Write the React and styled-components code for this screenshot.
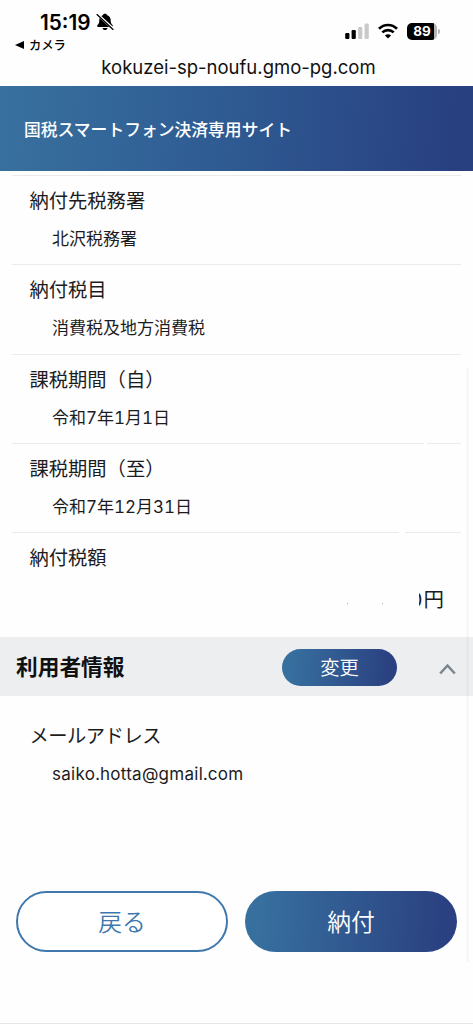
import React from 'react';
import styled, { createGlobalStyle } from 'styled-components';

const GlobalStyle = createGlobalStyle`
    * {
        box-sizing: border-box;
    }

    body {
        margin: 0;
        background: #fefefe;
        color: #1c1c1e;
        font-family: Inter, "Noto Sans CJK JP", sans-serif;
    }
`;

const StyledScreen = styled.div`
    position: relative;
    display: flex;
    flex-direction: column;
    width: 473px;
    height: 1024px;
    overflow: hidden;
    border-bottom: 1px solid #e6e6e6;
`;

const StyledStatusBar = styled.div`
    display: flex;
    justify-content: space-between;
    height: 54px;
    padding: 11px 33px 0 15px;
    color: #000;
`;

const StyledClock = styled.div`
    display: flex;
    align-items: center;
    gap: 5px;
    height: 22px;
    padding-left: 25px;
    font-size: 20.8px;
    font-weight: 600;
`;

const StyledBackLink = styled.div`
    display: flex;
    align-items: center;
    gap: 5px;
    height: 23px;
    font-size: 12.3px;
    font-weight: 500;
`;

const StyledBackArrow = styled.span`
    border-top: 4px solid transparent;
    border-bottom: 4px solid transparent;
    border-right: 9px solid #000;
`;

const StyledIndicators = styled.div`
    display: flex;
    align-items: center;
    gap: 9px;
    height: 40px;
`;

const StyledBattery = styled.div`
    display: flex;
    align-items: center;
    gap: 1px;
`;

const StyledBatteryLevel = styled.div`
    width: 30px;
    height: 17px;
    border-radius: 5px;
    background: linear-gradient(to right, #000 27px, #b5b5b5 27px);
    color: #fff;
    font-size: 13.5px;
    font-weight: 700;
    line-height: 17px;
    text-align: center;
`;

const StyledBatteryTip = styled.div`
    width: 2px;
    height: 5px;
    border-radius: 0 2px 2px 0;
    background: #b5b5b5;
`;

const StyledAddress = styled.div`
    height: 32px;
    color: #111;
    font-size: 18.5px;
    line-height: 27px;
    text-align: center;
    padding-left: 4px;
`;

const StyledHeader = styled.header`
    flex: none;
    height: 85px;
    padding-left: 24px;
    background: linear-gradient(95deg, #38719f 0%, #2f5c93 45%, #283f80 97%);
    color: #fff;
    font-size: 16.8px;
    font-weight: 500;
    line-height: 88px;
`;

const StyledDetails = styled.dl`
    flex: none;
    height: 466px;
    margin: 0;
    padding: 4px 12px 0;
`;

const StyledItem = styled.div`
    height: 89.35px;
    padding: 9px 18px 0 17.5px;
    border-top: ${props => props.$plain ? 'none' : '1px solid #ebebeb'};
`;

const StyledLabel = styled.dt`
    font-size: 19.3px;
    font-weight: 390;
    letter-spacing: ${props => props.$tight ? '-0.5px' : 'normal'};
    line-height: 32px;
`;

const StyledValue = styled.dd`
    margin: 6px 0 0 22.5px;
    font-size: 17px;
    font-weight: 390;
    font-variant-numeric: tabular-nums;
    letter-spacing: ${props => props.$latin ? '0.27px' : 'normal'};
    line-height: 32px;
`;

const StyledAmount = styled.dd`
    display: flex;
    align-items: center;
    justify-content: flex-end;
    margin: 10px -1px 0 0;
    font-size: 20.5px;
    font-weight: 390;
    line-height: 32px;
`;

const StyledSpeck = styled.span`
    width: 1px;
    height: 1px;
    margin: 6px 34px 0 0;
    background: #aaa;

    & + & {
        margin-right: 27px;
    }
`;

const StyledDigit = styled.span`
    margin-right: 1px;
`;

const StyledSectionBar = styled.div`
    flex: none;
    display: flex;
    align-items: center;
    height: 59px;
    padding: 0 17px 0 16px;
    background: #edeef0;
`;

const StyledSectionTitle = styled.h2`
    flex: 1;
    margin: 0;
    color: #111;
    font-size: 21.7px;
    font-weight: 700;
    line-height: 56px;
`;

const StyledButton = styled.button`
    display: flex;
    align-items: center;
    justify-content: center;
    width: ${props => props.$small ? '115px' : '212px'};
    height: ${props => props.$small ? '37px' : '61px'};
    margin: ${props => props.$small ? '2px 0 0' : '0'};
    padding: 0 0 2px;
    border: ${props => props.$outline ? '2px solid #3f78ad' : 'none'};
    border-radius: 31px;
    background: ${props => props.$outline ? '#fff' : 'linear-gradient(95deg, #376f9f 8%, #2a4080 94%)'};
    color: ${props => props.$outline ? '#3f78ad' : '#fff'};
    font-family: inherit;
    font-size: ${props => props.$small ? '19.3px' : '23.8px'};
    font-weight: 350;
`;

const StyledChevron = styled.svg`
    margin: 5px 0 0 42px;
`;

const StyledContact = styled.dl`
    flex: none;
    height: 195px;
    margin: 0;
    padding: 15px 12px 0;
`;

const StyledActions = styled.div`
    display: flex;
    gap: 17px;
    padding-left: 16px;
`;

// sits over the page content, like the browser's own scroll track
const StyledScrollTrack = styled.div`
    position: absolute;
    top: 368px;
    left: 466px;
    width: 3px;
    height: 594px;
    background: rgba(0, 0, 0, 0.025);
`;

// covers part of a divider or a digit
const StyledErased = styled.span`
    position: absolute;
    top: ${props => props.$top}px;
    left: ${props => props.$left}px;
    width: ${props => props.$width}px;
    height: ${props => props.$height}px;
    background: #fefefe;
`;

const details = [
    { label: '納付先税務署', value: '北沢税務署' },
    { label: '納付税目', value: '消費税及地方消費税' },
    { label: '課税期間（自）', value: '令和7年1月1日' },
    { label: '課税期間（至）', value: '令和7年12月31日' },
];

const BellOff = () => (
    <svg width="18" height="18" viewBox="0 0 18 18">
        <path d="M9 .8C7.8 .8 7 1.5 6.8 2.3C4.4 3.1 3.3 4.9 3.3 7.2C3.3 9.9 2.6 10.8 1.5 12C.8 12.9 1.1 14 2.3 14H15.7C16.9 14 17.2 12.9 16.5 12C15.4 10.8 14.7 9.9 14.7 7.2C14.7 4.9 13.6 3.1 11.2 2.3C11 1.5 10.2 .8 9 .8ZM6.5 14.9C6.8 16.3 7.7 17.1 9 17.1S11.2 16.3 11.5 14.9Z" fill="#000" />
        <path d="M1.4 1.2L17.4 16" stroke="#fff" strokeWidth="2.6" />
        <path d="M1 1.6L17 16.4" stroke="#000" strokeWidth="1.3" strokeLinecap="round" />
    </svg>
);

const Signal = () => (
    <svg width="24" height="16" viewBox="0 0 24 16">
        <rect x="0.2" y="10" width="4.2" height="6" rx="1.2" fill="#000" />
        <rect x="6.6" y="7" width="4.2" height="9" rx="1.2" fill="#000" />
        <rect x="13.1" y="4" width="4.2" height="12" rx="1.2" fill="#c9c9c9" />
        <rect x="19.6" y="0.5" width="4.2" height="15.5" rx="1.2" fill="#c9c9c9" />
    </svg>
);

const Wifi = () => (
    <svg width="20" height="16" viewBox="0 0 20 16" fill="none" stroke="#000" strokeWidth="2.7">
        <path d="M1 5.8C6 .7 14 .7 19 5.8" />
        <path d="M4.3 9.4C7.5 6.3 12.5 6.3 15.7 9.4" />
        <path d="M10 15.6L6.9 12.4C8.7 10.8 11.3 10.8 13.1 12.4Z" fill="#000" stroke="none" />
    </svg>
);

const App = () => {
    return (
        <React.Fragment>
            <GlobalStyle />
            <StyledScreen>
                <StyledStatusBar>
                    <div>
                        <StyledClock>15:19<BellOff /></StyledClock>
                        <StyledBackLink><StyledBackArrow />カメラ</StyledBackLink>
                    </div>
                    <StyledIndicators>
                        <Signal />
                        <Wifi />
                        <StyledBattery>
                            <StyledBatteryLevel>89</StyledBatteryLevel>
                            <StyledBatteryTip />
                        </StyledBattery>
                    </StyledIndicators>
                </StyledStatusBar>
                <StyledAddress>kokuzei-sp-noufu.gmo-pg.com</StyledAddress>
                <StyledHeader>国税スマートフォン決済専用サイト</StyledHeader>
                <StyledDetails>
                    {
                        details.map(item => (
                            <StyledItem key={item.label}>
                                <StyledLabel>{item.label}</StyledLabel>
                                <StyledValue>{item.value}</StyledValue>
                            </StyledItem>
                        ))
                    }
                    <StyledItem>
                        <StyledLabel>納付税額</StyledLabel>
                        <StyledAmount><StyledSpeck /><StyledSpeck /><StyledDigit>0</StyledDigit>円</StyledAmount>
                    </StyledItem>
                </StyledDetails>
                <StyledSectionBar>
                    <StyledSectionTitle>利用者情報</StyledSectionTitle>
                    <StyledButton $small>変更</StyledButton>
                    <StyledChevron width="17" height="12" viewBox="0 0 17 12">
                        <path d="M1.2 10.5L8.5 2.5L15.8 10.5" fill="none" stroke="#7b858d" strokeWidth="2.5" />
                    </StyledChevron>
                </StyledSectionBar>
                <StyledContact>
                    <StyledItem $plain>
                        <StyledLabel $tight>メールアドレス</StyledLabel>
                        <StyledValue $latin>saiko.hotta@gmail.com</StyledValue>
                    </StyledItem>
                </StyledContact>
                <StyledActions>
                    <StyledButton $outline>戻る</StyledButton>
                    <StyledButton>納付</StyledButton>
                </StyledActions>
                <StyledErased $top={440} $left={424} $width={3} $height={5} />
                <StyledErased $top={529} $left={399} $width={6} $height={5} />
                <StyledErased $top={588} $left={409} $width={10} $height={22} />
                <StyledScrollTrack />
            </StyledScreen>
        </React.Fragment>
    );
};

export default App;
